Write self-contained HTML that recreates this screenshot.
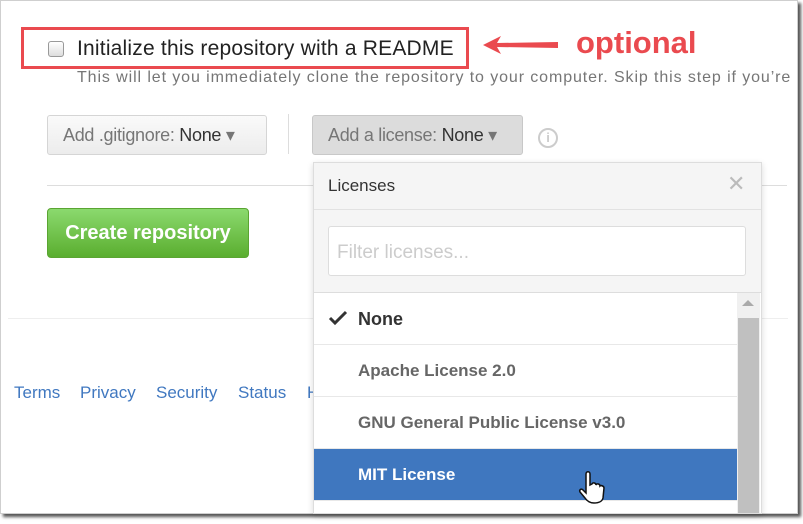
<!DOCTYPE html>
<html><head><style>
*{box-sizing:border-box;margin:0;padding:0}
body{width:803px;height:524px;background:#fff;font-family:"Liberation Sans",sans-serif;position:relative;overflow:hidden}
.frame{position:absolute;left:0;top:0;width:798px;height:514px;border:1px solid #cfcfcf;background:#fff;box-shadow:3px 3px 3px #555}
.abs{position:absolute}
.btn{position:absolute;height:40px;border:1px solid #d5d5d5;border-radius:3px;font-size:18px;color:#767676;line-height:38px;padding-left:15px;letter-spacing:-0.3px}
.btn b{font-weight:normal;color:#333}
.row{position:absolute;left:314px;width:423px;height:52px;border-bottom:1px solid #e8e8e8;font-weight:bold;font-size:17px;color:#666;line-height:52px;padding-left:44px}
.foot{position:absolute;top:383px;font-size:17px;color:#4078c0}
</style></head><body>
<div class="frame"></div>
<div class="abs" style="left:21px;top:27px;width:448px;height:42px;border:3px solid #ea4a4f"></div>
<div class="abs" style="left:48px;top:41px;width:16px;height:16px;border:1px solid #999;border-radius:3px;background:linear-gradient(#fff,#ddd)"></div>
<div class="abs" style="left:77px;top:37px;font-size:21px;color:#222;letter-spacing:0.2px">Initialize this repository with a README</div>
<svg class="abs" style="left:483px;top:34px" width="76" height="22"><polygon points="0,11 18,2 14,9 75,8 75,14 14,13 18,20" fill="#ea4a4f"/></svg>
<div class="abs" style="left:576px;top:25px;font-size:31px;font-weight:bold;color:#ea4a4f">optional</div>
<div class="abs" style="left:77px;top:69px;font-size:16px;color:#767676;white-space:nowrap;letter-spacing:0.9px">This will let you immediately clone the repository to your computer. Skip this step if you’re</div>
<div class="btn" style="left:47px;top:115px;width:220px;background:linear-gradient(#fafafa,#ececec)">Add .gitignore: <b>None</b> ▾</div>
<div class="abs" style="left:288px;top:114px;width:1px;height:40px;background:#ddd"></div>
<div class="btn" style="left:312px;top:115px;width:211px;background:#dcdcdc;border-color:#c8c8c8">Add a license: <b>None</b> ▾</div>
<div class="abs" style="left:538px;top:128px;width:20px;height:20px;border:2px solid #ccc;border-radius:50%;color:#ccc;font-size:13px;font-weight:bold;text-align:center;line-height:16px">i</div>
<div class="abs" style="left:47px;top:185px;width:740px;height:1px;background:#ddd"></div>
<div class="abs" style="left:47px;top:208px;width:202px;height:50px;border-radius:4px;background:linear-gradient(#8bd96e,#5aae2f);border:1px solid #5aa532;color:#fff;font-size:20px;font-weight:bold;text-align:center;line-height:48px">Create repository</div>
<div class="abs" style="left:8px;top:318px;width:780px;height:1px;background:#eee"></div>
<div class="foot" style="left:14px">Terms</div><div class="foot" style="left:80px">Privacy</div><div class="foot" style="left:156px">Security</div><div class="foot" style="left:238px">Status</div><div class="foot" style="left:307px">H</div>
<div class="abs" style="left:313px;top:162px;width:449px;height:352px;border:1px solid #ddd;background:#fff;box-shadow:0 2px 6px rgba(0,0,0,.15)"></div>
<div class="abs" style="left:314px;top:163px;width:447px;height:47px;background:#f5f5f5;border-bottom:1px solid #e2e2e2"></div>
<div class="abs" style="left:328px;top:176px;font-size:17px;color:#333">Licenses</div>
<div class="abs" style="left:727px;top:171px;font-size:22px;color:#bbb">✕</div>
<div class="abs" style="left:314px;top:210px;width:447px;height:83px;background:#f5f5f5;border-bottom:1px solid #ddd"></div>
<div class="abs" style="left:328px;top:226px;width:418px;height:50px;border:1px solid #ddd;border-radius:3px;background:#fff;font-size:19px;color:#ccc;line-height:52px;padding-left:8px">Filter licenses...</div>
<div class="row" style="top:293px;color:#333;font-size:18px">None</div>
<svg class="abs" style="left:328px;top:310px" width="20" height="16"><path d="M2 8 L7 13 L18 2" stroke="#333" stroke-width="3" fill="none"/></svg>
<div class="row" style="top:345px">Apache License 2.0</div>
<div class="row" style="top:397px">GNU General Public License v3.0</div>
<div class="row" style="top:449px;background:#3f77bf;color:#fff">MIT License</div>
<div class="abs" style="left:737px;top:293px;width:23px;height:220px;background:#f0f0f0"></div>
<div class="abs" style="left:742px;top:300px;width:0;height:0;border-left:6px solid transparent;border-right:6px solid transparent;border-bottom:6px solid #aaa"></div>
<div class="abs" style="left:738px;top:318px;width:21px;height:195px;background:#c0c0c0"></div>
<svg class="abs" style="left:576px;top:471px" width="30" height="34"><path d="M10 3 C10 0 14 0 14 3 L14 14 L16 13 C17 11 20 12 20 14 C21 12 24 13 24 15 C25 14 28 15 28 17 L27 27 C26 31 22 32 18 32 C14 32 11 30 9 27 L4 21 C3 19 5 17 7 19 L10 22 Z" fill="#fff" stroke="#111" stroke-width="1.5"/></svg>
</body></html>
